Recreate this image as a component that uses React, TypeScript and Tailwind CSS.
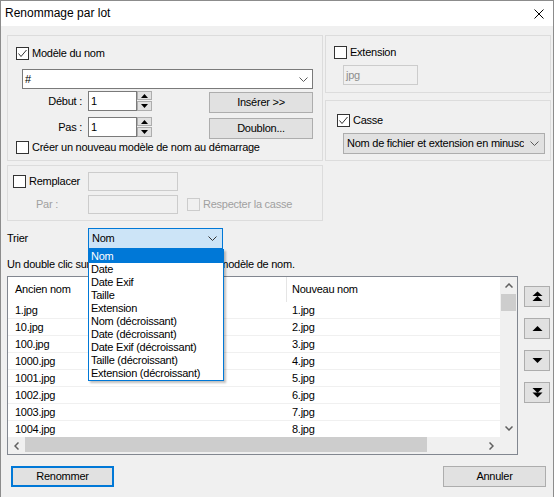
import React from 'react';
import clsx from 'clsx';

const FILES = [
  ['1.jpg', '1.jpg'],
  ['10.jpg', '2.jpg'],
  ['100.jpg', '3.jpg'],
  ['1000.jpg', '4.jpg'],
  ['1001.jpg', '5.jpg'],
  ['1002.jpg', '6.jpg'],
  ['1003.jpg', '7.jpg'],
  ['1004.jpg', '8.jpg'],
  ['1005.jpg', '9.jpg'],
];

const SORT_OPTIONS = [
  'Nom',
  'Date',
  'Date Exif',
  'Taille',
  'Extension',
  'Nom (décroissant)',
  'Date (décroissant)',
  'Date Exif (décroissant)',
  'Taille (décroissant)',
  'Extension (décroissant)',
];

const Checkbox: React.FC<{ checked?: boolean; disabled?: boolean }> = ({ checked, disabled }) => (
  <span
    className={clsx(
      'flex h-[13px] w-[13px] shrink-0 items-center justify-center border',
      disabled ? 'border-[#cccccc] bg-[#f0f0f0]' : 'border-[#333333] bg-white',
    )}
  >
    {checked && (
      <svg width="11" height="11" viewBox="0 0 11 11">
        <path d="M1.5 5.5 L4 8.5 L9.5 2" fill="none" stroke="#333" strokeWidth="1" />
      </svg>
    )}
  </span>
);

const Chevron: React.FC<{ color?: string }> = ({ color = '#5a5a5a' }) => (
  <svg width="9" height="5" viewBox="0 0 9 5" className="shrink-0">
    <path d="M0.5 0.5 L4.5 4.5 L8.5 0.5" fill="none" stroke={color} strokeWidth="1" />
  </svg>
);

const Spin: React.FC = () => (
  <div className="flex h-[20px] w-[15px] flex-col gap-[1px]">
    <div className="flex h-[9px] items-center justify-center border border-[#adadad] bg-[#e1e1e1]">
      <svg width="7" height="4" viewBox="0 0 7 4">
        <polygon points="3.5,0 7,4 0,4" fill="#000" />
      </svg>
    </div>
    <div className="flex h-[10px] items-center justify-center border border-[#adadad] bg-[#e1e1e1]">
      <svg width="7" height="4" viewBox="0 0 7 4">
        <polygon points="0,0 7,0 3.5,4" fill="#000" />
      </svg>
    </div>
  </div>
);

const Button: React.FC<{ children: React.ReactNode; className?: string; focused?: boolean }> = ({
  children,
  className,
  focused,
}) => (
  <div
    className={clsx(
      'flex h-[21px] items-center justify-center bg-[#e1e1e1]',
      focused ? 'border-2 border-[#0078d7]' : 'border border-[#adadad]',
      className,
    )}
  >
    {children}
  </div>
);

const MoveButton: React.FC<{ kind: 'top' | 'up' | 'down' | 'bottom' }> = ({ kind }) => (
  <div className="flex h-[21px] w-[26px] items-center justify-center border border-[#adadad] bg-[#e1e1e1]">
    <svg width="11" height="11" viewBox="0 0 11 11">
      {kind === 'top' && (
        <>
          <polygon points="5.5,0.5 10.5,5 0.5,5" fill="#000" />
          <polygon points="5.5,5 10.5,10 0.5,10" fill="#000" />
        </>
      )}
      {kind === 'up' && <polygon points="5.5,3 10.5,8 0.5,8" fill="#000" />}
      {kind === 'down' && <polygon points="0.5,3 10.5,3 5.5,8" fill="#000" />}
      {kind === 'bottom' && (
        <>
          <polygon points="0.5,1 10.5,1 5.5,6" fill="#000" />
          <polygon points="0.5,5.5 10.5,5.5 5.5,10.5" fill="#000" />
        </>
      )}
    </svg>
  </div>
);

export default function App() {
  return (
    <div className="flex h-[497px] w-[554px] flex-col overflow-hidden border-x border-t border-[#8c8c8c] bg-[#f0f0f0] font-['Liberation_Sans',Arial,sans-serif] text-[11px] leading-[13px] tracking-[-0.25px] text-black">
      {/* title bar */}
      <div className="flex h-[25px] shrink-0 items-center justify-between bg-white pl-[4px] pr-[9px]">
        <span className="text-[12px] tracking-normal">Renommage par lot</span>
        <svg width="10" height="10" viewBox="0 0 10 10">
          <path d="M0.5 0.5 L9.5 9.5 M9.5 0.5 L0.5 9.5" stroke="#000" strokeWidth="1" />
        </svg>
      </div>

      <div className="flex flex-col pl-[6px] pt-[9px]">
        {/* top groups */}
        <div className="flex gap-[2px]">
          <div className="flex h-[126px] w-[316px] flex-col border border-[#dcdcdc] pr-[9px]">
            <label className="ml-[8px] mt-[11px] flex h-[13px] items-center gap-[3px]">
              <Checkbox checked />
              <span>Modèle du nom</span>
            </label>
            <div className="ml-[14px] mt-[9px] flex h-[20px] items-center justify-between border border-[#7a7a7a] bg-white pl-[2px] pr-[4px]">
              <span>#</span>
              <Chevron />
            </div>
            <div className="mt-[2px] flex items-start justify-between">
              <div className="flex flex-col gap-[6px]">
                {['Début :', 'Pas :'].map((label) => (
                  <div key={label} className="flex items-center">
                    <span className="w-[80px] pr-[6px] text-right">{label}</span>
                    <div className="flex h-[20px] w-[49px] items-center border border-[#7a7a7a] bg-white pl-[2px]">
                      1
                    </div>
                    <Spin />
                  </div>
                ))}
              </div>
              <div className="mt-[1px] flex w-[104px] flex-col gap-[5px]">
                <Button>Insérer &gt;&gt;</Button>
                <Button>Doublon...</Button>
              </div>
            </div>
            <label className="ml-[8px] mt-[2px] flex h-[13px] items-center gap-[3px]">
              <Checkbox />
              <span>Créer un nouveau modèle de nom au démarrage</span>
            </label>
          </div>

          <div className="flex w-[226px] flex-col gap-[7px]">
            <div className="flex h-[58px] flex-col border border-[#dcdcdc]">
              <label className="ml-[8px] mt-[10px] flex h-[13px] items-center gap-[3px]">
                <Checkbox />
                <span>Extension</span>
              </label>
              <div className="ml-[17px] mt-[6px] flex h-[20px] w-[75px] items-center border border-[#cccccc] bg-[#f0f0f0] pl-[2px] text-[#8d8d8d]">
                jpg
              </div>
            </div>
            <div className="flex h-[61px] flex-col border border-[#dcdcdc]">
              <label className="ml-[11px] mt-[13px] flex h-[13px] items-center gap-[3px]">
                <Checkbox checked />
                <span>Casse</span>
              </label>
              <div className="ml-[17px] mt-[6px] flex h-[21px] w-[202px] items-center gap-[6px] border border-[#adadad] bg-[#e1e1e1] pl-[3px] pr-[5px]">
                <span className="flex-1 overflow-hidden whitespace-nowrap">
                  Nom de fichier et extension en minuscules
                </span>
                <Chevron />
              </div>
            </div>
          </div>
        </div>

        {/* replace group */}
        <div className="mt-[4px] flex h-[56px] w-[316px] flex-col gap-[4px] border border-[#dcdcdc] pt-[6px]">
          <div className="flex h-[19px] items-center">
            <label className="flex w-[80px] items-center gap-[3px] pl-[5px]">
              <Checkbox />
              <span>Remplacer</span>
            </label>
            <div className="h-[19px] w-[90px] border border-[#cccccc] bg-[#f0f0f0]" />
          </div>
          <div className="flex h-[19px] items-center text-[#a0a0a0]">
            <span className="w-[80px] pl-[28px]">Par :</span>
            <div className="h-[19px] w-[90px] border border-[#cccccc] bg-[#f0f0f0]" />
            <label className="ml-[9px] flex items-center gap-[3px]">
              <Checkbox disabled />
              <span>Respecter la casse</span>
            </label>
          </div>
        </div>

        {/* sort */}
        <div className="mt-[7px] flex h-[21px] items-center">
          <span className="w-[81px]">Trier</span>
          <div className="relative">
            <div className="flex h-[21px] w-[135px] items-center justify-between border border-[#0078d7] bg-[#cce4f7] pl-[3px] pr-[5px]">
              <span>Nom</span>
              <Chevron color="#333" />
            </div>
            <ul className="absolute left-0 top-[21px] z-10 w-[136px] border border-[#0078d7] bg-white shadow-[2px_2px_2px_rgba(0,0,0,0.25)]">
              {SORT_OPTIONS.map((opt, i) => (
                <li
                  key={opt}
                  className={clsx(
                    'h-[13px] pl-[2px] leading-[13px]',
                    i === 0 && 'bg-[#0078d7] text-white',
                  )}
                >
                  {opt}
                </li>
              ))}
            </ul>
          </div>
        </div>

        <p className="mt-[8px] h-[14px] whitespace-nowrap leading-[14px]">
          Un double clic sur une photo pour l'ajouter au modèle de nom.
        </p>

        {/* list + move buttons */}
        <div className="mt-[5px] flex gap-[6px]">
          <div className="flex h-[179px] w-[511px] flex-col border border-[#828790] bg-white">
            <div className="flex min-h-0 flex-1">
              <div className="flex-1 overflow-hidden">
                <div className="flex h-[25px] items-center">
                  <span className="w-[278px] pl-[7px]">Ancien nom</span>
                  <span className="h-full w-px bg-[#e5e5e5]" />
                  <span className="pl-[5px]">Nouveau nom</span>
                </div>
                {FILES.map(([oldName, newName]) => (
                  <div key={oldName} className="flex h-[17px] items-center border-b border-[#f0f0f0]">
                    <span className="w-[279px] pl-[7px]">{oldName}</span>
                    <span className="pl-[5px]">{newName}</span>
                  </div>
                ))}
              </div>
              <div className="flex w-[17px] flex-col bg-[#f0f0f0]">
                <div className="flex h-[17px] items-center justify-center">
                  <svg width="8" height="5" viewBox="0 0 8 5">
                    <path d="M0.5 4.5 L4 1 L7.5 4.5" fill="none" stroke="#606060" strokeWidth="1.5" />
                  </svg>
                </div>
                <div className="ml-px h-[17px] w-[15px] bg-[#cdcdcd]" />
                <div className="flex-1" />
                <div className="flex h-[17px] items-center justify-center">
                  <svg width="8" height="5" viewBox="0 0 8 5">
                    <path d="M0.5 0.5 L4 4 L7.5 0.5" fill="none" stroke="#606060" strokeWidth="1.5" />
                  </svg>
                </div>
              </div>
            </div>
            <div className="flex h-[17px] bg-[#f0f0f0]">
              <div className="flex w-[17px] items-center justify-center">
                <svg width="5" height="8" viewBox="0 0 5 8">
                  <path d="M4.5 0.5 L1 4 L4.5 7.5" fill="none" stroke="#606060" strokeWidth="1.5" />
                </svg>
              </div>
              <div className="mb-[2px] w-[402px] bg-[#cdcdcd]" />
              <div className="flex-1" />
              <div className="flex w-[17px] items-center justify-center">
                <svg width="5" height="8" viewBox="0 0 5 8">
                  <path d="M0.5 0.5 L4 4 L0.5 7.5" fill="none" stroke="#606060" strokeWidth="1.5" />
                </svg>
              </div>
              <div className="w-[17px]" />
            </div>
          </div>
          <div className="flex flex-col gap-[11px] pt-[10px]">
            <MoveButton kind="top" />
            <MoveButton kind="up" />
            <MoveButton kind="down" />
            <MoveButton kind="bottom" />
          </div>
        </div>

        {/* bottom buttons */}
        <div className="mt-[11px] flex">
          <Button focused className="ml-[4px] w-[103px]">
            Renommer
          </Button>
          <Button className="ml-auto mr-[7px] w-[103px]">Annuler</Button>
        </div>
      </div>
    </div>
  );
}
